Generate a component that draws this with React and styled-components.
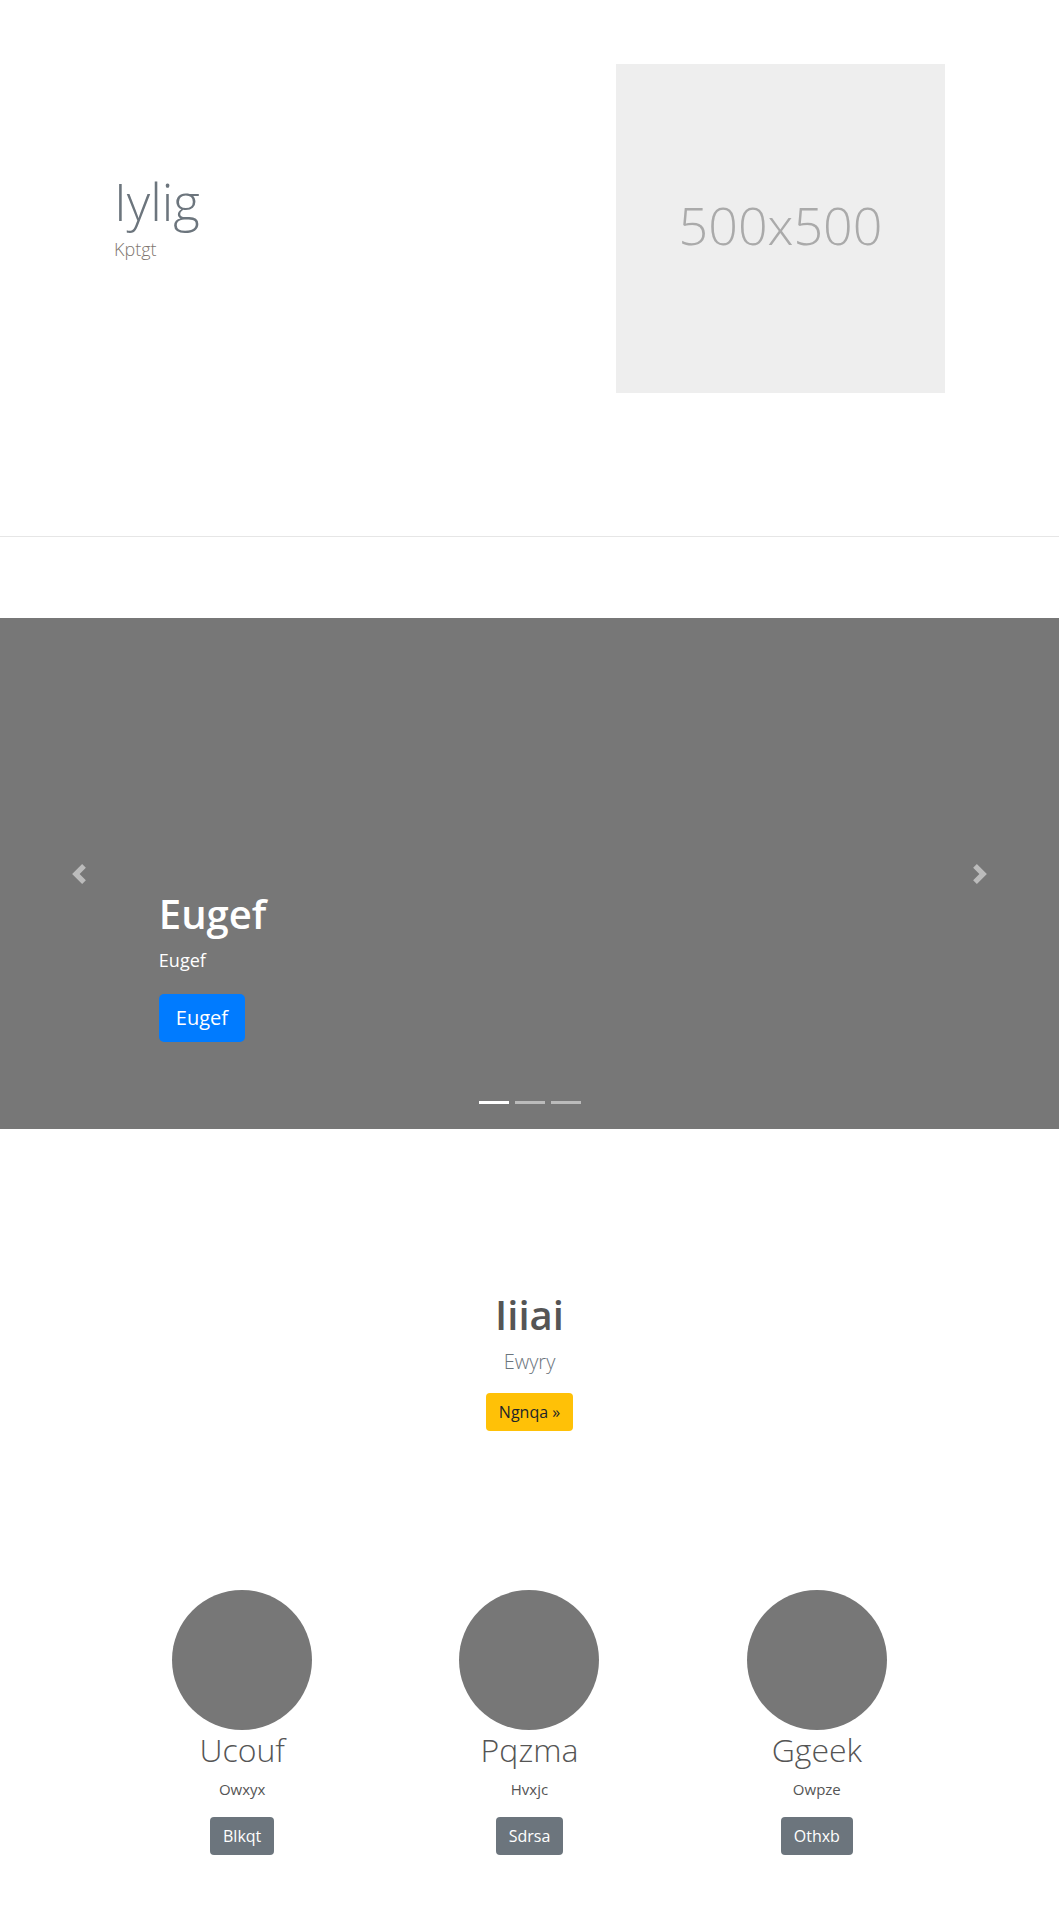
import React from "react";
import styled, { createGlobalStyle } from "styled-components";

const GlobalStyle = createGlobalStyle`
  body {
    margin: 0;
    font-family: "Open Sans", "Liberation Sans", sans-serif;
    color: #212529;
    background: #fff;
  }
  * {
    box-sizing: border-box;
  }
`;

const team = [
  { name: "Ucouf", role: "Owxyx", action: "Blkqt" },
  { name: "Pqzma", role: "Hvxjc", action: "Sdrsa" },
  { name: "Ggeek", role: "Owpze", action: "Othxb" },
];

const Chevron = ({ flip }) => (
  <svg width="20" height="20" viewBox="0 0 8 8" fill="#fff">
    <path
      d={
        flip
          ? "M2.75 0l-1.5 1.5L3.75 4l-2.5 2.5L2.75 8l4-4-4-4z"
          : "M5.25 0l-4 4 4 4 1.5-1.5L4.25 4l2.5-2.5L5.25 0z"
      }
    />
  </svg>
);

const App = () => {
  return (
    <Page>
      <GlobalStyle />

      <Hero>
        <HeroInner>
          <HeroText>
            <HeroTitle>Iylig</HeroTitle>
            <HeroLead>Kptgt</HeroLead>
          </HeroText>
          <Placeholder>500x500</Placeholder>
        </HeroInner>
      </Hero>

      <Carousel>
        <Slide>
          <CaptionTitle>Eugef</CaptionTitle>
          <CaptionText>Eugef</CaptionText>
          <Button variant="primary" size="lg">
            Eugef
          </Button>
        </Slide>
        <Control side="left">
          <Chevron />
        </Control>
        <Control side="right">
          <Chevron flip />
        </Control>
        <Indicators>
          <Indicator active />
          <Indicator />
          <Indicator />
        </Indicators>
      </Carousel>

      <Intro>
        <IntroTitle>Iiiai</IntroTitle>
        <IntroLead>Ewyry</IntroLead>
        <Button variant="warning">Ngnqa »</Button>
      </Intro>

      <Team>
        {team.map((m) => (
          <Member key={m.name}>
            <Avatar />
            <MemberName>{m.name}</MemberName>
            <MemberRole>{m.role}</MemberRole>
            <Button variant="secondary">{m.action}</Button>
          </Member>
        ))}
      </Team>
    </Page>
  );
};

export default App;

const Page = styled.div`
  width: 100%;
  min-height: 1920px;
`;

const Hero = styled.section`
  padding: 64px 0 143px;
  border-bottom: 1px solid #e6e6e6;
  margin-bottom: 81px;
`;

const HeroInner = styled.div`
  max-width: 831px;
  margin: 0 auto;
  display: flex;
  align-items: center;
  justify-content: space-between;
`;

const HeroText = styled.div`
  padding-bottom: 23px;
`;

const HeroTitle = styled.h1`
  margin: 0 0 4px;
  font-size: 51px;
  font-weight: 300;
  line-height: 1.2;
  color: #6c757d;
`;

const HeroLead = styled.p`
  margin: 0;
  font-size: 18px;
  font-weight: 300;
  line-height: 1.5;
  color: #807670;
`;

const Placeholder = styled.div`
  width: 329px;
  height: 329px;
  background: #eeeeee;
  color: #aaaaaa;
  font-size: 52px;
  font-weight: 300;
  display: flex;
  align-items: center;
  justify-content: center;
  padding-bottom: 8px;
`;

const Carousel = styled.section`
  position: relative;
  height: 511px;
  background: #777777;
  overflow: hidden;
`;

const Slide = styled.div`
  height: 100%;
  display: flex;
  flex-direction: column;
  justify-content: flex-end;
  align-items: flex-start;
  padding: 0 15% 87px;
  color: #fff;
`;

const CaptionTitle = styled.h2`
  margin: 0 0 9px;
  font-size: 40px;
  font-weight: 600;
  line-height: 1.2;
`;

const CaptionText = styled.p`
  margin: 0 0 20px;
  font-size: 18px;
  line-height: 1.5;
`;

const Control = styled.div`
  position: absolute;
  top: 0;
  bottom: 0;
  ${(p) => (p.side === "left" ? "left: 0;" : "right: 0;")}
  width: 15%;
  display: flex;
  align-items: center;
  justify-content: center;
  opacity: 0.5;
`;

const Indicators = styled.div`
  position: absolute;
  left: 0;
  right: 0;
  bottom: 25px;
  display: flex;
  justify-content: center;
  gap: 6px;
`;

const Indicator = styled.span`
  width: 30px;
  height: 3px;
  background: #fff;
  opacity: ${(p) => (p.active ? 1 : 0.5)};
`;

const Button = styled.button`
  border: 1px solid transparent;
  border-radius: ${(p) => (p.size === "lg" ? "5px" : "4px")};
  font-family: inherit;
  font-size: ${(p) => (p.size === "lg" ? "20px" : "16px")};
  line-height: 1.5;
  padding: ${(p) => (p.size === "lg" ? "8px 16px" : "6px 12px")};
  cursor: pointer;
  background: ${(p) =>
    p.variant === "primary"
      ? "#007bff"
      : p.variant === "warning"
      ? "#ffc107"
      : "#6c757d"};
  color: ${(p) => (p.variant === "warning" ? "#212529" : "#fff")};
`;

const Intro = styled.section`
  padding-top: 162px;
  display: flex;
  flex-direction: column;
  align-items: center;
  text-align: center;
`;

const IntroTitle = styled.h2`
  margin: 0 0 8px;
  font-size: 40px;
  font-weight: 600;
  line-height: 1.2;
  color: #555555;
`;

const IntroLead = styled.p`
  margin: 0 0 16px;
  font-size: 20px;
  font-weight: 300;
  line-height: 1.5;
  color: #6c757d;
`;

const Team = styled.section`
  max-width: 862px;
  margin: 159px auto 0;
  display: grid;
  grid-template-columns: repeat(3, 1fr);
`;

const Member = styled.div`
  display: flex;
  flex-direction: column;
  align-items: center;
  text-align: center;
`;

const Avatar = styled.div`
  width: 140px;
  height: 140px;
  border-radius: 50%;
  background: #777777;
`;

const MemberName = styled.h3`
  margin: 2px 0 12px;
  font-size: 32px;
  font-weight: 300;
  line-height: 1.1;
  color: #555555;
`;

const MemberRole = styled.p`
  margin: 0 0 17px;
  font-size: 15px;
  line-height: 1.4;
  color: #555555;
`;
